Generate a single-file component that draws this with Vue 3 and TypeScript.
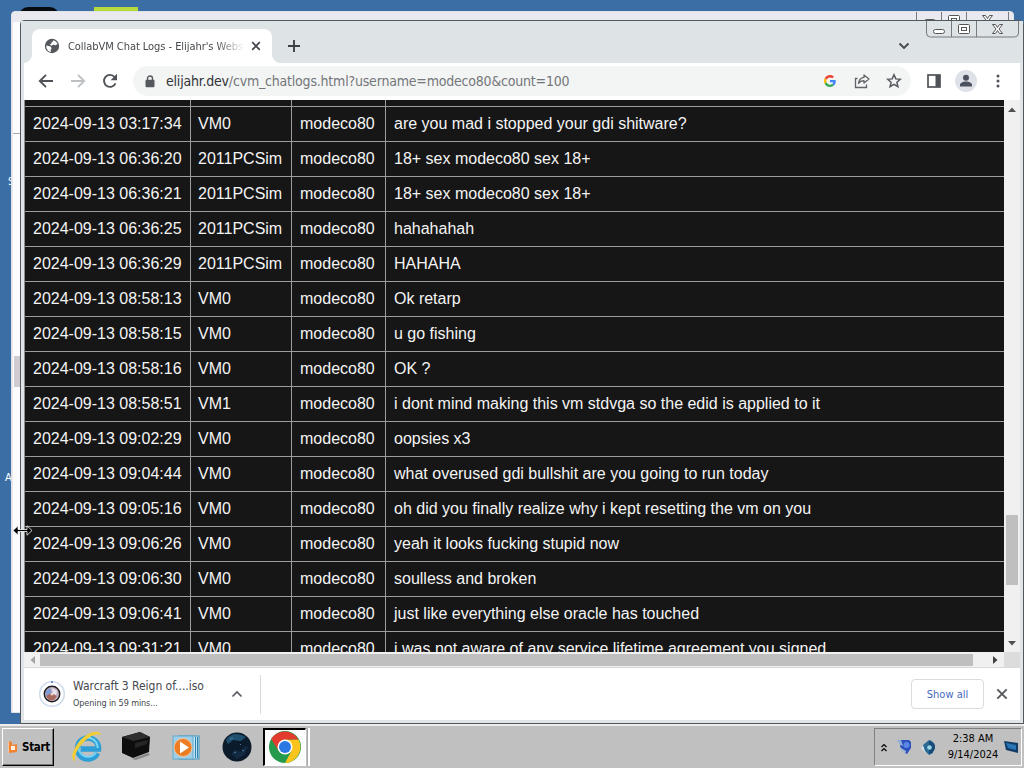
<script setup lang="ts">
import { ref } from 'vue'

interface LogEntry {
  time: string
  vm: string
  user: string
  message: string
}

function entry(time: string, vm: string, message: string): LogEntry {
  return { time: `2024-09-13 ${time}`, vm, user: 'modeco80', message }
}

const logs = ref<LogEntry[]>([
  entry('03:17:34', 'VM0', 'are you mad i stopped your gdi shitware?'),
  entry('06:36:20', '2011PCSim', '18+ sex modeco80 sex 18+'),
  entry('06:36:21', '2011PCSim', '18+ sex modeco80 sex 18+'),
  entry('06:36:25', '2011PCSim', 'hahahahah'),
  entry('06:36:29', '2011PCSim', 'HAHAHA'),
  entry('08:58:13', 'VM0', 'Ok retarp'),
  entry('08:58:15', 'VM0', 'u go fishing'),
  entry('08:58:16', 'VM0', 'OK ?'),
  entry('08:58:51', 'VM1', 'i dont mind making this vm stdvga so the edid is applied to it'),
  entry('09:02:29', 'VM0', 'oopsies x3'),
  entry('09:04:44', 'VM0', 'what overused gdi bullshit are you going to run today'),
  entry('09:05:16', 'VM0', 'oh did you finally realize why i kept resetting the vm on you'),
  entry('09:06:26', 'VM0', 'yeah it looks fucking stupid now'),
  entry('09:06:30', 'VM0', 'soulless and broken'),
  entry('09:06:41', 'VM0', 'just like everything else oracle has touched'),
  entry('09:31:21', 'VM0', 'i was not aware of any service lifetime agreement you signed'),
])

const showShelf = ref(true)
</script>

<template>
  <div class="desktop">
    <div class="desk-icon dark"></div>
    <div class="desk-icon lime"></div>
    <span class="desk-label first">S</span>
    <span class="desk-label second">A</span>

    <div class="back-window">
      <div class="back-body">
        <div class="back-thumb"></div>
      </div>
      <svg class="caption" width="94" height="17" viewBox="0 0 94 17">
        <path d="M.5 0v12q0 4 4 4h84q4 0 4-4V0M25.5 0v16M50.5 0v16" fill="none" stroke="#777b80" />
        <rect x="8.500" y="7.500" width="11" height="4" rx="2" fill="#fff" stroke="#555" />
        <rect x="32.500" y="3.500" width="11" height="9" rx="1" fill="#fff" stroke="#555" />
        <rect x="35.500" y="6.500" width="5" height="3" fill="#fff" stroke="#555" />
        <path d="M66.500 3.500h3l2 3 2-3h3l-3.500 4.500 3.500 4.500h-3l-2-3-2 3h-3l3.500-4.500z" fill="#fff" stroke="#555" />
      </svg>
    </div>

    <div class="window">
      <div class="tabstrip">
        <div class="tab">
          <svg class="globe" width="16" height="16" viewBox="0 0 16 16">
            <circle cx="8" cy="8" r="7.200" fill="#54585d" />
            <path d="M2.300 7.500l4.200 1 1.200 1.800-1 1.200.2 2.600C4 13.600 2 10.800 2.300 7.500zM9 2.200c2.200.3 4 1.800 4.600 3.800l-2 1.300-2.400-.6-1.800 1-1.600-1.200 1.800-1.200.2-1.500 1.400-.4z" fill="#fff" />
          </svg>
          <span class="tab-title">CollabVM Chat Logs - Elijahr's Website</span>
          <svg class="tab-close" width="10" height="10" viewBox="0 0 10 10">
            <path d="M1.200 1.200l7.600 7.600M8.800 1.200L1.200 8.800" stroke="#45494d" stroke-width="1.800" />
          </svg>
        </div>
        <svg class="new-tab" width="14" height="14" viewBox="0 0 14 14">
          <path d="M7 1v12M1 7h12" stroke="#3c4043" stroke-width="1.900" />
        </svg>
        <svg class="tab-search" width="12" height="8" viewBox="0 0 12 8">
          <path d="M1.500 1.500L6 6l4.500-4.500" fill="none" stroke="#45494d" stroke-width="1.900" />
        </svg>
      </div>

      <svg class="caption" width="94" height="17" viewBox="0 0 94 17">
        <path d="M.5 0v12q0 4 4 4h84q4 0 4-4V0M25.500 0v16M50.500 0v16" fill="none" stroke="#777b80" />
        <rect x="7.500" y="8.500" width="11" height="4" rx="2" fill="#fff" stroke="#555" />
        <rect x="32.500" y="3.500" width="11" height="9" rx="1" fill="#fff" stroke="#555" />
        <rect x="35.500" y="6.500" width="5" height="3" fill="#fff" stroke="#555" />
        <path d="M66.500 3.500h3l2 3 2-3h3l-3.500 4.500 3.500 4.500h-3l-2-3-2 3h-3l3.500-4.500z" fill="#fff" stroke="#555" />
      </svg>

      <div class="toolbar">
        <svg class="nav" width="16" height="16" viewBox="0 0 16 16">
          <path d="M15 8H2.500M8 1.800L1.800 8 8 14.200" fill="none" stroke="#4f5357" stroke-width="1.900" />
        </svg>
        <svg class="nav" width="16" height="16" viewBox="0 0 16 16">
          <path d="M1 8h12.500M8 1.800L14.200 8 8 14.200" fill="none" stroke="#bdc0c3" stroke-width="1.900" />
        </svg>
        <svg class="nav" width="16" height="16" viewBox="0 0 16 16">
          <path d="M13.500 10.300A6 6 0 1 1 12.600 4L14 5.500" fill="none" stroke="#4f5357" stroke-width="1.900" />
          <path d="M15 .8v6.400H8.600z" fill="#4f5357" />
        </svg>
        <div class="omnibox">
          <svg width="10" height="13" viewBox="0 0 10 13">
            <path d="M2.500 5V3.500a2.500 2.500 0 0 1 5 0V5" fill="none" stroke="#55595d" stroke-width="1.400" />
            <rect x=".5" y="4.700" width="9" height="7.500" rx="1" fill="#55595d" />
          </svg>
          <span class="url"><b>elijahr.dev</b>/cvm_chatlogs.html?username=modeco80&amp;count=100</span>
          <svg class="google" width="12" height="12" viewBox="0 0 48 48">
            <path fill="#ea4335" d="M24 9.500c3.500 0 6.700 1.200 9.200 3.600l6.900-6.900C35.900 2.400 30.500 0 24 0 14.600 0 6.500 5.400 2.600 13.200l8 6.200C12.400 13.700 17.700 9.500 24 9.500z" />
            <path fill="#4285f4" d="M47 24.500c0-1.600-.2-3.100-.4-4.500H24v9h12.900c-.6 3-2.200 5.500-4.700 7.200l7.700 6C44.400 38 47 31.800 47 24.500z" />
            <path fill="#fbbc05" d="M10.500 28.600c-.5-1.500-.8-3-.8-4.600s.3-3.100.8-4.600l-8-6.200C.9 16.500 0 20.100 0 24s.9 7.500 2.600 10.800z" />
            <path fill="#34a853" d="M24 48c6.500 0 11.900-2.100 15.900-5.800l-7.700-6c-2.200 1.500-4.900 2.300-8.200 2.300-6.300 0-11.600-4.200-13.500-9.900l-8 6.200C6.500 42.600 14.600 48 24 48z" />
          </svg>
          <svg width="16" height="16" viewBox="0 0 16 16">
            <path d="M3.500 5.500H1.500v9h11v-3" fill="none" stroke="#606468" stroke-width="1.300" />
            <path d="M10 2l5 4-5 4V7.700c-2.500 0-4.200.8-5.500 2.800.4-3.400 2.300-5.600 5.500-6.100z" fill="none" stroke="#606468" stroke-width="1.300" stroke-linejoin="round" />
          </svg>
          <svg width="16" height="16" viewBox="0 0 16 16">
            <path d="M8 1.800l1.800 4.100 4.500.4-3.400 3 1 4.400L8 11.400l-3.900 2.300 1-4.400-3.400-3 4.500-.4z" fill="none" stroke="#55595d" stroke-width="1.500" />
          </svg>
        </div>
        <svg class="side-panel" width="14" height="14" viewBox="0 0 14 14">
          <rect x="1" y="1" width="12" height="12" fill="#fff" stroke="#4f5357" stroke-width="1.700" />
          <rect x="8.500" y="1" width="4.500" height="12" fill="#4f5357" />
        </svg>
        <svg class="profile" width="22" height="22" viewBox="0 0 22 22">
          <circle cx="11" cy="11" r="11" fill="#dee1e8" />
          <circle cx="11" cy="7.800" r="3" fill="#4c5160" />
          <path d="M5 16.500v-1.600c0-2 3-3.300 6-3.300s6 1.300 6 3.300v1.600z" fill="#4c5160" />
        </svg>
        <svg class="menu" width="4" height="14" viewBox="0 0 4 14">
          <circle cx="2" cy="2" r="1.500" fill="#4f5357" />
          <circle cx="2" cy="7" r="1.500" fill="#4f5357" />
          <circle cx="2" cy="12" r="1.500" fill="#4f5357" />
        </svg>
      </div>

      <div class="page">
        <div class="viewport">
          <div class="row partial"><span></span><span></span><span></span><span></span></div>
          <div v-for="log in logs" :key="log.time" class="row">
            <span>{{ log.time }}</span>
            <span>{{ log.vm }}</span>
            <span>{{ log.user }}</span>
            <span>{{ log.message }}</span>
          </div>
        </div>
        <div class="vscroll">
          <svg width="8" height="5" viewBox="0 0 8 5"><path d="M0 5l4-4.500L8 5z" fill="#505050" /></svg>
          <div class="vthumb"></div>
          <svg width="8" height="5" viewBox="0 0 8 5"><path d="M0 0l4 4.500L8 0z" fill="#505050" /></svg>
        </div>
      </div>
      <div class="hscroll">
        <svg width="5" height="8" viewBox="0 0 5 8"><path d="M5 0L.5 4 5 8z" fill="#a3a3a3" /></svg>
        <div class="hthumb"></div>
        <svg width="5" height="8" viewBox="0 0 5 8"><path d="M0 0l4.500 4L0 8z" fill="#404040" /></svg>
        <div class="corner"></div>
      </div>

      <div v-if="showShelf" class="shelf">
        <svg class="disc" width="28" height="28" viewBox="0 0 28 28">
          <circle cx="14" cy="14" r="12.300" fill="#fff" stroke="#cfdcec" stroke-width="1.600" />
          <path d="M14 1v2" stroke="#4c78b8" stroke-width="1.500" />
          <circle cx="14" cy="14" r="7.700" fill="#c6b4c4" stroke="#202024" stroke-width="1.500" />
          <path d="M8 11l4-3 2 5-6 3z" fill="#7e9bd6" />
          <path d="M14 8l5 3-1 4-3-1z" fill="#e6e4f2" />
          <path d="M8 16l5-3 6 3-3 4-5 .5z" fill="#a8695f" />
          <circle cx="14" cy="14" r="1.500" fill="#e9d6ca" />
        </svg>
        <div class="file">
          <span class="file-name">Warcraft 3 Reign of....iso</span>
          <span class="file-status">Opening in 59 mins...</span>
        </div>
        <svg class="expand" width="12" height="8" viewBox="0 0 12 8">
          <path d="M1.500 6.500L6 2l4.500 4.500" fill="none" stroke="#55595d" stroke-width="1.600" />
        </svg>
        <div class="divider"></div>
        <button class="show-all">Show all</button>
        <svg class="shelf-close" width="12" height="12" viewBox="0 0 12 12" @click="showShelf = false">
          <path d="M1.300 1.300l9.400 9.400M10.700 1.300l-9.400 9.400" stroke="#55595d" stroke-width="1.900" />
        </svg>
      </div>
    </div>

    <div class="taskbar">
      <button class="start">
        <svg width="10" height="14" viewBox="0 0 10 14">
          <path d="M1 1l3 1v3l5-1v8l-8 1z" fill="#f08432" />
          <path d="M3 6h4v4H3z" fill="#fff1df" />
          <path d="M0 2l1-1v11l-1 1z" fill="#f6c9a0" />
        </svg>
        <span>Start</span>
      </button>

      <svg class="task ie" width="32" height="32" viewBox="0 0 32 32">
        <path d="M26.500 22A10.500 10.500 0 1 1 27.500 18H10" fill="none" stroke="#2d9fd6" stroke-width="5.600" />
        <path d="M25 21.500A9.500 9.500 0 1 1 26.500 17" fill="none" stroke="#79d6f5" stroke-width="2" />
        <path d="M3 30C-2 25 5 12 14 5 21 0 30-1 30 4c-4-2-9 0-15 5C8 15 3 23 4 30z" fill="#f0cd35" />
      </svg>
      <svg class="task box" width="32" height="30" viewBox="0 0 32 30">
        <path d="M2 6L20 1l10 5-1 15-16 6-11-5z" fill="#0e0e0e" />
        <path d="M2 6L20 1l10 5-17 4z" fill="#2e2e2e" />
        <path d="M15 12l13-3-1 4-12 4z" fill="#262626" />
        <path d="M12 28l16-6 2 2-14 5z" fill="#8a8a8a" />
      </svg>
      <svg class="task wmp" width="28" height="26" viewBox="0 0 28 26">
        <rect x="7" y="1" width="20" height="23" fill="#bfe3f3" stroke="#3d92bd" />
        <path d="M23.500 2v21M25.500 2v21" stroke="#2f82ae" />
        <rect x="1" y="1" width="20" height="23" fill="#9dcfe8" stroke="#62a9cd" />
        <circle cx="11" cy="12.500" r="9" fill="#ed7d22" stroke="#f8c293" />
        <path d="M8 6.500l9 6-9 6z" fill="#fff" />
      </svg>
      <svg class="task orb" width="30" height="32" viewBox="0 0 30 32">
        <circle cx="15" cy="16" r="14.500" fill="#0c1b2b" />
        <path d="M4 9Q11-1 24 6l-5 4-8-1-5 4z" fill="#20506f" />
        <path d="M9 23l4-4 6 2 4-6 3 1-4 8-7 4z" fill="#122b42" />
        <path d="M8 8l3-1M20 19l2 1M12 22l2-1M18 13l1 1" stroke="#4d8099" />
      </svg>
      <div class="active-task">
        <svg width="32" height="32" viewBox="0 0 32 32">
          <circle cx="16" cy="16" r="16" fill="#249a4c" />
          <path d="M16 8.500h13.600A16 16 0 0 1 16 32l6.500-12.200z" fill="#fbc41d" />
          <path d="M2.140 8l7.360 11.800L16 8.500h13.600A16 16 0 0 0 2.140 8z" fill="#e33b2e" />
          <circle cx="16" cy="16" r="7.500" fill="#fff" />
          <circle cx="16" cy="16" r="6" fill="#2b78e4" />
        </svg>
      </div>
      <div class="task-edge"></div>

      <div class="tray">
        <svg class="chevrons" width="6" height="9" viewBox="0 0 6 9">
          <path d="M.5 4L3 1.500 5.500 4M.5 8L3 5.500 5.500 8" fill="none" stroke="#000" stroke-width="1.200" />
        </svg>
        <svg class="shield" width="15" height="16" viewBox="0 0 15 16">
          <path d="M3 1l9 0 2 2v6l-4 6-5-3-2-5z" fill="#2c50bd" />
          <path d="M0 1h4l2 6-3-1z" fill="#8fb0d8" />
          <circle cx="9.500" cy="6" r="3" fill="#5b86e6" />
          <path d="M4 9l5 3-1 3-4-3z" fill="#a8b8cc" />
        </svg>
        <svg class="sound" width="15" height="17" viewBox="0 0 15 17">
          <path d="M0 9l4-4 2 7-1 2z" fill="#d2e4ec" />
          <path d="M2 6l6-5 3 1 1 12-4 2-4-4z" fill="#2b6a94" />
          <path d="M8 2q7 1 6 7-1 5-6 6z" fill="#164a77" />
          <circle cx="8.500" cy="8.500" r="2.300" fill="#9bd5e7" />
        </svg>
        <div class="clock"><span>2:38 AM</span><span>9/14/2024</span></div>
        <svg class="monitor" width="14" height="15" viewBox="0 0 14 15">
          <path d="M0 1l14 2v10L2 10z" fill="#123c67" />
          <path d="M2 3l10 2v5L4 8z" fill="#2a75b4" />
        </svg>
      </div>
    </div>

    <svg class="cursor" width="21" height="11" viewBox="0 0 21 11">
      <path d="M1 5.500L6 .8v3.700h9V.8l5 4.700-5 4.700V6.500H6v3.700z" fill="#000" stroke="#fff" stroke-width=".8" />
    </svg>
  </div>
</template>

<style>
body {
  margin: 0;
  overflow: hidden;
}
</style>

<style scoped>
.desktop {
  position: relative;
  width: 1024px;
  height: 768px;
  overflow: hidden;
  background: #3b6ea5;
  font-family: "DejaVu Sans Condensed", "DejaVu Sans", sans-serif;
  display: flex;
  flex-direction: column;
  justify-content: flex-end;
}

.desktop * {
  box-sizing: border-box;
}

svg {
  display: block;
  flex: none;
}

.desk-icon {
  position: absolute;
  height: 9px;
  top: 7px;
}

.desk-icon.dark {
  left: 19px;
  width: 40px;
  background: #080b12;
  border-radius: 20px 20px 0 0;
}

.desk-icon.lime {
  left: 94px;
  width: 44px;
  background: #b6d93b;
}

.desk-label {
  position: absolute;
  left: 8px;
  font-size: 11px;
  line-height: 13px;
  color: #fff;
}

.desk-label.first {
  top: 175px;
}

.desk-label.second {
  left: 5px;
  top: 471px;
}

.back-window {
  position: absolute;
  left: 11px;
  top: 11px;
  width: 1003px;
  height: 702px;
  border: 1px solid #dfe3e8;
  border-radius: 4px 4px 0 0;
  background: #ebe9f0;
}

.back-body {
  margin: 10px 0 0 1px;
  height: 690px;
  width: 20px;
  background: linear-gradient(#aaa, #aaa) 0 111px / 100% 1px no-repeat #fcfbfd;
  padding-top: 334px;
}

.back-thumb {
  height: 31px;
  margin-left: 1px;
  background: #cfcbd0;
}

.back-window .caption {
  position: absolute;
  left: 904px;
  top: 0;
}

.window {
  position: absolute;
  left: 20px;
  top: 20px;
  width: 1004px;
  height: 704px;
  border: 1px solid #505860;
  border-radius: 4px 4px 0 0;
  background: #fff;
  padding: 0 3px 2px;
  box-shadow: inset 0 0 0 3px #e2e5e7;
}

.window > .caption {
  position: absolute;
  left: 905px;
  top: 0;
}

.tabstrip {
  height: 42px;
  margin: 0 -3px;
  padding: 8px 0 0 11px;
  background: #dee3e6;
  display: flex;
  align-items: flex-start;
}

.tab {
  position: relative;
  width: 240px;
  height: 34px;
  padding: 0 11px 0 12px;
  border-radius: 8px 8px 0 0;
  background: #fff;
  display: flex;
  align-items: center;
}

.tab::before,
.tab::after {
  content: '';
  position: absolute;
  bottom: 0;
  width: 8px;
  height: 8px;
}

.tab::before {
  left: -8px;
  background: radial-gradient(circle at 0 0, transparent 7.5px, #fff 8px);
}

.tab::after {
  right: -8px;
  background: radial-gradient(circle at 100% 0, transparent 7.5px, #fff 8px);
}

.tab-title {
  width: 175px;
  margin-left: 8px;
  overflow: hidden;
  white-space: nowrap;
  font-size: 11px;
  letter-spacing: -0.05px;
  color: #45494d;
  mask-image: linear-gradient(90deg, #000 148px, transparent 177px);
}

.tab-close {
  margin-left: auto;
}

.new-tab {
  margin: 10px 0 0 15px;
}

.tab-search {
  margin: 13px 0 0 597px;
}

.toolbar {
  height: 37px;
  padding: 0 0 1px 14px;
  display: flex;
  align-items: center;
}

.nav {
  margin-right: 16px;
}

.omnibox {
  width: 778px;
  height: 30px;
  margin-left: -1px;
  padding: 0 9px 0 12px;
  border-radius: 15px;
  background: #f3f4f4;
  display: flex;
  align-items: center;
}

.url {
  margin-left: 11px;
  font-size: 14px;
  letter-spacing: -0.2px;
  color: #73777b;
  white-space: nowrap;
}

.url b {
  font-weight: normal;
  color: #303337;
}

.google {
  margin: 0 18px 0 auto;
}

.omnibox svg:last-child {
  margin-left: 16px;
}

.side-panel {
  margin-left: 16px;
}

.profile {
  margin-left: 14px;
}

.menu {
  margin-left: 19px;
}

.page {
  height: 552px;
  display: flex;
}

.viewport {
  width: 980px;
  height: 100%;
  overflow: hidden;
  border-left: 1px solid #8a908d;
  background: #161616;
  color: #f4f4f4;
  font: 16px/35px "Liberation Sans", Arial, sans-serif;
}

.row {
  height: 35px;
  display: grid;
  grid-template-columns: 166px 101px 94px 1fr;
  border-bottom: 1px solid #9b9e9c;
  white-space: nowrap;
}

.row.partial {
  height: 7px;
}

.row span {
  padding-left: 8px;
  line-height: 33px;
  border-right: 1px solid #9b9e9c;
}

.row span:nth-child(2) {
  padding-left: 7px;
}

.row span:last-child {
  border-right: none;
}

.vscroll {
  width: 16px;
  padding: 7px 0 6px;
  background: #f0f0f0;
  display: flex;
  flex-direction: column;
  align-items: center;
}

.vthumb {
  width: 12px;
  height: 70px;
  margin: 403px 0 auto;
  background: #bfbfbf;
}

.hscroll {
  height: 16px;
  background: #f0f0f0;
  border-bottom: 1px solid #d8d8d8;
  padding-left: 6px;
  display: flex;
  align-items: center;
}

.hthumb {
  width: 933px;
  height: 12px;
  margin: 0 20px 0 5px;
  background: #bfbfbf;
}

.corner {
  width: 16px;
  height: 15px;
  margin-left: auto;
  background: #dcdcdc;
}

.shelf {
  height: 52px;
  padding: 0 12px 0 14px;
  display: flex;
  align-items: center;
}

.file {
  width: 144px;
  margin-left: 7px;
  display: flex;
  flex-direction: column;
  white-space: nowrap;
  color: #45494d;
}

.file-name {
  font-size: 12px;
  line-height: 17px;
  letter-spacing: -0.02px;
}

.file-status {
  font-size: 9px;
  line-height: 16px;
  letter-spacing: -0.1px;
}

.expand {
  margin-left: 14px;
}

.divider {
  width: 1px;
  height: 39px;
  margin-left: 17px;
  background: #d8dadd;
}

.show-all {
  width: 73px;
  height: 30px;
  margin-left: auto;
  padding: 0;
  border: 1px solid #dadce0;
  border-radius: 4px;
  background: #fff;
  color: #4669be;
  font: 11px "DejaVu Sans Condensed", "DejaVu Sans", sans-serif;
}

.shelf-close {
  margin-left: 12px;
}

.taskbar {
  height: 44px;
  border-top: 2px solid #ececec;
  background: #c0c0c0;
  display: flex;
  align-items: flex-start;
}

.start {
  width: 52px;
  height: 38px;
  margin: 2px 0 0 2px;
  padding: 0 0 0 5px;
  border: 1px solid #fff;
  border-right: 1px solid #000;
  border-bottom: 1px solid #000;
  box-shadow: inset -1px -1px 0 #777;
  background: #c0c0c0;
  display: flex;
  align-items: center;
  gap: 4px;
  font: bold 11.5px "DejaVu Sans Condensed", "DejaVu Sans", sans-serif;
  letter-spacing: -0.3px;
  color: #000;
}

.task {
  margin-top: 5px;
}

.ie {
  margin-left: 17px;
}

.box {
  margin-left: 17px;
}

.wmp {
  margin: 9px 0 0 20px;
}

.orb {
  margin-left: 22px;
}

.active-task {
  width: 43px;
  height: 38px;
  margin: 2px 0 0 11px;
  padding: 1px 0 0 4px;
  border: 1px solid #fff;
  border-top: 2px solid #000;
  border-left: 2px solid #000;
  background: #fcfcfc;
}

.task-edge {
  width: 3px;
  height: 38px;
  margin: 2px 0 0 1px;
  border-left: 1px solid #aaa;
  background: #fff;
}

.tray {
  width: 148px;
  height: 38px;
  margin: 2px 2px 0 auto;
  padding-left: 6px;
  border: 1px solid #fff;
  border-top-color: #808080;
  border-left-color: #808080;
  display: flex;
  align-items: center;
}

.shield {
  margin-left: 10px;
}

.sound {
  margin-left: 9px;
}

.clock {
  width: 60px;
  margin-left: 7px;
  display: flex;
  flex-direction: column;
  align-items: center;
  font-size: 11px;
  line-height: 16px;
  letter-spacing: -0.05px;
  white-space: nowrap;
}

.monitor {
  margin-left: 1px;
}

.cursor {
  position: absolute;
  left: 12px;
  top: 525px;
}
</style>
